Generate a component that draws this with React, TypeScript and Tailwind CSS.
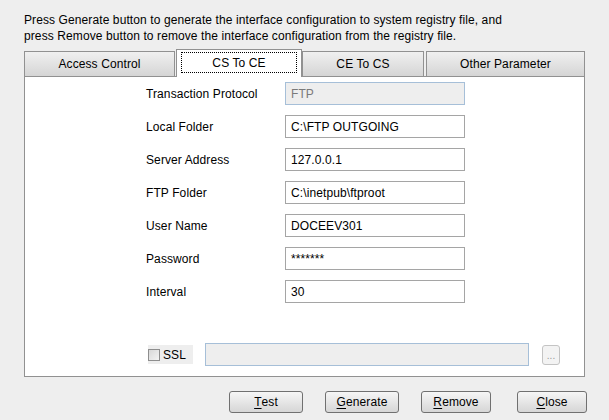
import React from 'react';

const fields = [
  { label: 'Transaction Protocol', value: 'FTP', disabled: true },
  { label: 'Local Folder', value: 'C:\\FTP OUTGOING' },
  { label: 'Server Address', value: '127.0.0.1' },
  { label: 'FTP Folder', value: 'C:\\inetpub\\ftproot' },
  { label: 'User Name', value: 'DOCEEV301' },
  { label: 'Password', value: '*******' },
  { label: 'Interval', value: '30' },
];

const Btn = ({ first, rest, w, ml }: { first: string; rest: string; w: string; ml: string }) => (
  <button
    className={`${w} ${ml} h-[22px] rounded-[3px] border border-[#707070] bg-gradient-to-b from-[#f6f6f6] to-[#d6d6d6] text-[12px] text-black flex items-center justify-center`}
  >
    <span className="underline underline-offset-2">{first}</span>
    {rest}
  </button>
);

export default function App() {
  return (
    <div
      className="w-[609px] h-[420px] bg-[#eeeeee] text-black text-[12px] tracking-[0.1px] overflow-hidden"
      style={{ fontFamily: '"Liberation Sans", Arial, sans-serif' }}
    >
      <div className="pt-[12px] pl-[24px] leading-[16px]">
        <div>Press Generate button to generate the interface configuration to system registry file, and</div>
        <div>press Remove button to remove the interface configuration from the registry file.</div>
      </div>

      {/* tabs */}
      <div className="ml-[24px] mt-[5px] w-[561px] flex items-end h-[28px] relative z-10">
        <div className="w-[151px] h-[25px] mb-[1px] border border-b-0 border-[#919191] bg-gradient-to-b from-[#f0f0f0] to-[#d5d5d5] flex items-center justify-center">
          Access Control
        </div>
        <div className="ml-[1px] w-[126px] h-[28px] border border-b-0 border-[#919191] bg-white flex items-center justify-center px-[4px] pt-[2px] pb-[4px]">
          <div className="w-full h-full border border-dotted border-black flex items-center justify-center">CS To CE</div>
        </div>
        <div className="w-[122px] h-[25px] mb-[1px] border border-b-0 border-[#919191] bg-gradient-to-b from-[#f0f0f0] to-[#d5d5d5] flex items-center justify-center">
          CE To CS
        </div>
        <div className="ml-[2px] w-[159px] h-[25px] mb-[1px] border border-b-0 border-[#919191] bg-gradient-to-b from-[#f0f0f0] to-[#d5d5d5] flex items-center justify-center">
          Other Parameter
        </div>
      </div>

      {/* panel */}
      <div className="ml-[24px] -mt-[1px] w-[561px] h-[301px] border border-[#919191] bg-white">
        <div className="pt-[5px] flex flex-col gap-[10px]">
          {fields.map((f) => (
            <div key={f.label} className="flex items-center h-[23px]">
              <div className="w-[139px] pl-[121px] box-content shrink-0">
                <span className="whitespace-nowrap">{f.label}</span>
              </div>
              <div
                className={`w-[180px] h-[23px] border flex items-center pl-[5px] ${
                  f.disabled
                    ? 'bg-[#eeeeee] border-[#a6bfd8] text-[#7a7a7a]'
                    : 'bg-white border-[#a5a5a5]'
                }`}
              >
                {f.value}
              </div>
            </div>
          ))}
        </div>

        <div className="mt-[40px] flex items-center h-[23px]">
          <div className="ml-[123px] w-[45px] h-[19px] bg-[#eeeeee] flex items-center gap-[3px]">
            <div className="w-[12px] h-[12px] border border-[#8e8e8e] bg-gradient-to-br from-[#d8d8d8] to-[#f4f4f4]" />
            <span>SSL</span>
          </div>
          <div className="ml-[12px] w-[324px] h-[23px] border border-[#a6bfd8] bg-[#eeeeee]" />
          <div className="ml-[13px] w-[18px] h-[20px] rounded-[3px] border border-[#c4c4c4] bg-[#f3f3f3] text-[#9a9a9a] text-[10px] flex items-end justify-center pb-[3px] leading-none">
            ...
          </div>
        </div>
      </div>

      {/* buttons */}
      <div className="mt-[14px] flex">
        <Btn first="T" rest="est" w="w-[74px]" ml="ml-[229px]" />
        <Btn first="G" rest="enerate" w="w-[74px]" ml="ml-[22px]" />
        <Btn first="R" rest="emove" w="w-[70px]" ml="ml-[22px]" />
        <Btn first="C" rest="lose" w="w-[70px]" ml="ml-[26px]" />
      </div>
    </div>
  );
}
